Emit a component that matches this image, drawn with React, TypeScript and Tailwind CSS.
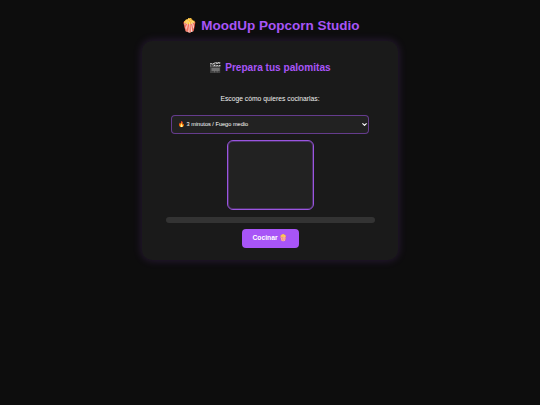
export default function App() {
  return (
    <div className="min-h-[405px] bg-[#0d0d0d] flex flex-col items-center font-['Liberation_Sans',Arial,sans-serif]">
      <h1 className="mt-[17px] h-[18px] leading-[18px] text-[13.5px] font-bold text-[#a855f7] whitespace-nowrap">🍿 MoodUp Popcorn Studio</h1>
      <div className="mt-[6px] w-[256px] h-[219px] rounded-[10px] bg-[#1a1a1a] shadow-[0_0_10px_rgba(168,85,247,0.2)] flex flex-col items-center">
        <h2 className="mt-[20px] h-[14px] leading-[14px] text-[10.1px] font-bold text-[#a855f7] whitespace-nowrap">🎬 Prepara tus palomitas</h2>
        <p className="mt-[19px] h-[9px] leading-[9px] text-[6.75px] text-[#f0f0f0] whitespace-nowrap">Escoge cómo quieres cocinarlas:</p>
        <div className="relative mt-[12px] w-[198px] h-[19px]">
          <select className="block appearance-none w-full h-full rounded-[4px] border border-[#a855f7]/50 bg-[#222222] text-[5.6px] text-white pl-[6px] font-['Liberation_Sans',Arial,sans-serif]">
            <option>🔥 3 minutos / Fuego medio</option>
          </select>
          <svg className="absolute right-[2px] top-[7px] w-[5px] h-[5px]" viewBox="0 0 10 10" fill="none" stroke="#ffffff" strokeWidth="2.2" strokeLinecap="round" strokeLinejoin="round">
            <path d="M1.5 3.2 5 6.8 8.5 3.2" />
          </svg>
        </div>
        <div className="mt-[6px] w-[87px] h-[70px] rounded-[6px] border border-[#9a55e0] bg-[#222222] shadow-[inset_0_0_0_1px_rgba(168,85,247,0.3)]"></div>
        <div className="mt-[6.5px] w-[209px] h-[6.5px] rounded-[3px] bg-[#333333]"></div>
        <button className="mt-[6px] w-[57px] h-[19px] rounded-[4px] bg-[#a855f7] text-white text-[6.75px] font-bold whitespace-nowrap">Cocinar 🍿</button>
      </div>
    </div>
  );
}
